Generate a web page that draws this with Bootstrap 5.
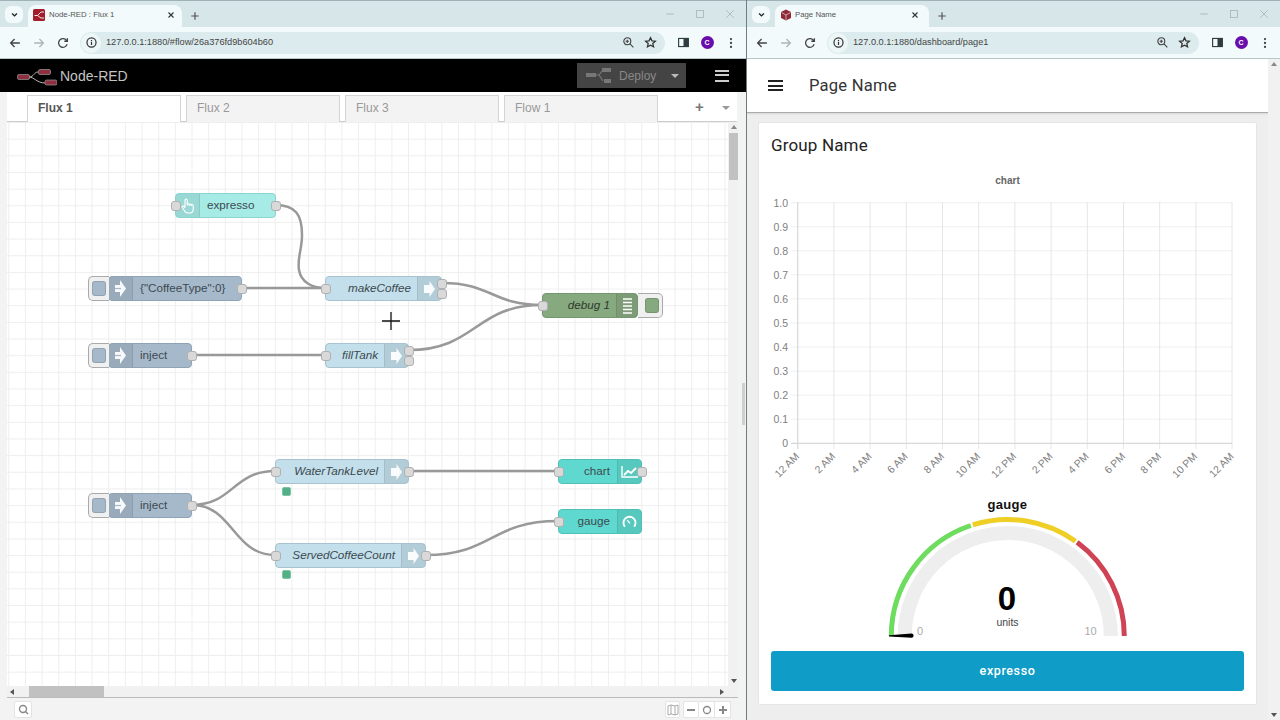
<!doctype html>
<html lang="en">
<head>
<meta charset="utf-8">
<title>Node-RED and Dashboard</title>
<link href="https://cdn.jsdelivr.net/npm/bootstrap@5.3.0/dist/css/bootstrap.min.css" rel="stylesheet">
<style>
html,body{height:720px;overflow:hidden;margin:0;background:#fff;font-family:"Liberation Sans",Arial,sans-serif}
.stage{width:1280px;height:720px}
.win{height:720px;min-width:0}
.win-l{width:747px;flex:0 0 747px;border-right:1px solid #6f7f81}
.win-r{width:533px;flex:0 0 533px}
.strip{height:27px;flex:0 0 27px;background:#d7e6e8;border-top:1px solid #9fb3b6;padding-left:5px}
.chev{width:18px;height:17px;background:#f3fafb;border-radius:6px;margin-bottom:4px}
.ctab{width:154px;height:22px;margin-left:5px;background:#f3fafb;border-radius:8px 8px 0 0;font-size:7.8px;color:#555;padding:0 6px 2px 5px}
.ctab-t{margin-left:4px;white-space:nowrap}
.win-r .ctab{padding-right:9px}
.win-r .ctab-t{margin-left:3px}
.plus-b{width:26px;margin-left:0;margin-bottom:5px}
.ctrls{margin-left:auto;margin-right:1px;margin-bottom:4px}
.ctrl{width:30px;height:18px}
.tools{height:32px;flex:0 0 32px;background:#f3fafb;border-bottom:1px solid #b8c8ca;padding:0 3px}
.tb{width:24px;height:24px;flex:0 0 24px}
.omni{height:22px;background:#dcebed;border-radius:11px;margin:0 6px 0 5px;padding:0 4px 0 1px;font-size:9.2px;color:#444;min-width:0}
.omni-i{width:20px;height:20px;background:#eef7f8;border-radius:50%;flex:0 0 20px}
.omni-u{margin-left:5px;white-space:nowrap}
.omni-b{width:22px;height:20px}
.avatar{width:13px;height:13px;border-radius:50%;background:#6a0dad;color:#fff;font-size:7px;line-height:13px;text-align:center;font-weight:700}
.nr-head{height:33px;flex:0 0 33px;background:#000;padding:0 17px 0 17px;flex-wrap:nowrap}
.nr-logo{margin-top:2px}
.nr-name{color:#c4c4c4;font-size:14px;margin-left:3px;margin-top:2px}
.nr-deploy{width:109px;height:25px;background:#444;color:#888;font-size:12px;border:0;border-radius:0;padding:0 8px 0 9px;margin-left:auto;margin-right:29px}
.nr-deploy:hover{background:#444;color:#888}
.nr-caret{width:0;height:0;border-left:4px solid transparent;border-right:4px solid transparent;border-top:4px solid #bbb;margin-left:auto;margin-right:-1px}
.nr-burger{width:14px;height:12px;border-top:2.5px solid #ccc;border-bottom:2.5px solid #ccc;position:relative}
.nr-burger::after{content:"";display:block;height:2.5px;background:#ccc;margin-top:2.25px}
.nr-tabs{height:30px;flex:0 0 30px;background:#fff;margin-left:7px;border-bottom:1px solid #ccc;padding:3px 0 0 20px;margin-right:1px;position:relative;flex-wrap:nowrap}
.nr-tab{width:154px;height:27px;margin:0 5px 0 0;border:1px solid #d4d4d4;border-bottom:0;background:#f3f3f3;color:#999;font-size:12px;padding:3px 0 0 10px}
.nr-tab.on{background:#fff;color:#555;font-weight:700;height:27px;position:relative;z-index:1;padding-left:10px}
.nr-tabs .ms-auto{height:23px;margin-right:7px}
.nr-plus{color:#777;font-size:15px;font-weight:700;line-height:1;width:16px;margin-right:11px}
.nr-tcaret{width:0;height:0;border-left:4px solid transparent;border-right:4px solid transparent;border-top:4px solid #999;margin-top:3px}
.work{flex:1 1 auto;min-height:0;background:#f3f3f3}
.canv-row{height:564px;flex:0 0 564px}
.canv{width:721px;height:564px;flex:0 0 721px;position:relative;overflow:hidden;background-color:#fff;
 background-image:linear-gradient(#eee 1px,transparent 1px),linear-gradient(90deg,#eee 1px,transparent 1px);background-size:16.67px 16.67px;background-position:1.3px 0}
.wires{position:absolute;left:0;top:0}
.vbar{width:10px;flex:0 0 10px;background:#f1f1f1;position:relative}
.vthumb{position:absolute;left:1px;right:0;top:11px;height:47px;background:#c1c1c1}
.sarr{position:absolute;width:0;height:0}
.sarr-u{top:3px;left:3px;border-left:3px solid transparent;border-right:3px solid transparent;border-bottom:4px solid #888}
.sarr-d{bottom:3px;left:3px;border-left:3px solid transparent;border-right:3px solid transparent;border-top:4px solid #555}
.hbar{height:11px;flex:0 0 11px;background:#f1f1f1;position:relative;border-bottom:1px solid #bbb;box-sizing:content-box;margin-left:7px}
.hthumb{position:absolute;left:22px;top:0;width:75px;height:11px;background:#c1c1c1}
.sarr-l{left:3px;top:3px;border-top:3px solid transparent;border-bottom:3px solid transparent;border-right:4px solid #555}
.sarr-r{right:14px;top:3px;border-top:3px solid transparent;border-bottom:3px solid transparent;border-left:4px solid #555}
.nr-foot{height:23px;padding:3px 7px 0 14px}
.nr-fb{height:17px;background:#fff;border:1px solid #e4e4e4;border-radius:2px;width:18px}
.nr-fb2{width:16px}
.nr-fb-map{width:15px;margin-right:3px}
.nr-fb3{width:16px;border-left:0;border-radius:0}
.nr-sep{width:8px;flex:0 0 8px;background:#f3f3f3;position:relative}
.nr-handle{position:absolute;left:4px;top:291px;width:3px;height:42px;background:#cfcfcf}
.nnode{position:absolute;height:25px;border:1px solid #9cb0b8;border-radius:4px;display:flex;align-items:center;font-size:11.7px;color:#3c4a50;white-space:nowrap;padding-bottom:1px}
.nlab{margin-left:auto;margin-right:30px}
.nlab-l{margin-left:31px}
.nico{position:absolute;top:0;bottom:0;width:24px;background:rgba(0,0,0,.08);display:flex;align-items:center;justify-content:center}
.nico-l{left:0;border-right:1px solid rgba(0,0,0,.08);border-radius:3px 0 0 3px}
.nico-r{right:0;border-left:1px solid rgba(0,0,0,.08);border-radius:0 3px 3px 0}
.nport{position:absolute;width:10px;height:10px;background:#d9d9d9;border:1px solid #b0b0b0;border-radius:3px;top:6.5px;z-index:2}
.nport-i{left:-5.5px}
.nport-o{right:-5.5px}
.nport-a{top:1.5px}
.nport-b{top:11.5px}
.nk-inj{background:#a6b9cb;border-color:#8ea3b6}
.nk-fn{background:#c3dfeb;font-style:italic;border-color:#a8c3cf}
.nk-dbg{background:#87a980;font-style:italic;border-color:#75956f;color:#2e3a2b}
.nk-dbg .nlab{margin-right:27px}
.nk-dbg .nico{width:21px}
.nk-ui{background:#5fd9cf;border-color:#4fc0b7}
.nk-ui .nlab{margin-right:31px}
.nk-btn{background:#a6ebe6;border-color:#8bd3ce}
.nbtn{position:absolute;top:-1px;height:25px;background:#f0f0f0;border:1px solid #aaa}
.nbtn-l{left:-21px;width:21px;border-radius:5px 0 0 5px;border-right:0}
.nbtn-r{right:-26px;width:25px;border-radius:0 5px 5px 0;border-left:0;}
.nbtn i{position:absolute;display:block;width:14px;height:15px;top:4px;border-radius:3px;border:1px solid rgba(0,0,0,.12)}
.nbtn-l i{left:3px}
.nbtn-r i{left:7px}
.nstat{position:absolute;width:9px;height:9px;border-radius:2px;background:#53b086;border:1px solid #7cc4a4;left:275px}
#n1{left:168px;top:71px;width:101px}
#n2{left:101px;top:154px;width:134px}
#n3{left:318px;top:154px;width:117px}
#n4{left:535px;top:171px;width:96px}
#n5{left:101px;top:221px;width:84px}
#n6{left:318px;top:221px;width:84px}
#n7{left:101px;top:371px;width:84px}
#n8{left:268px;top:337px;width:134px}
#n9{left:268px;top:421px;width:151px}
#n10{left:551px;top:337px;width:84px}
#n11{left:551px;top:387px;width:84px}
#st1{top:365px}
#st2{top:448px}
.cross{position:absolute;left:373px;top:188px}
.dash-head{height:54px;flex:0 0 54px;background:#fff;border-bottom:1px solid #aaa;padding:0 0 0 21px;flex-wrap:nowrap;justify-content:flex-start;box-shadow:0 1px 2px rgba(0,0,0,.1)}
.dash-burger{width:15px;height:11px;border-top:2px solid #222;border-bottom:2px solid #222}
.dash-burger::after{content:"";display:block;height:2px;background:#222;margin-top:2.5px}
.dash-title{font-family:Roboto,"Liberation Sans",sans-serif;font-size:16.6px;color:#333;margin-left:26px;margin-top:2px;letter-spacing:.2px}
.dash-body{flex:1 1 auto;min-height:0}
.dash-main{flex:1 1 auto;background:#eee;padding:9px 11px 0 11px;min-width:0}
.dash-sb{width:12px;flex:0 0 12px;background:#f1f1f1;position:relative}
.dash-card{height:583px;border:1px solid #e6e6e6;border-radius:2px;padding:0}
.dash-gt{font-family:Roboto,"Liberation Sans",sans-serif;font-size:17px;color:#222;line-height:20px;margin:12px 0 15px 12px;letter-spacing:.15px}
.dash-svg{display:block}
.dash-btn{display:block;width:473px;height:40px;margin:6px 0 0 12px;background:#0f9dc7;border:0;border-radius:3px;color:#fff;font-family:Roboto,"Liberation Sans",sans-serif;font-size:12.5px;font-weight:500;letter-spacing:.6px;padding:0}
.dash-btn:hover{background:#0f9dc7;color:#fff}
.ct{font-family:"Liberation Sans",sans-serif;font-size:10.5px;fill:#808080}
</style>
</head>
<body>
<svg class="d-none">
<symbol id="i-chev" viewBox="0 0 16 16"><path d="M4.5 6.5 8 10l3.5-3.5" fill="none" stroke="#222" stroke-width="2"/></symbol>
<symbol id="i-x" viewBox="0 0 16 16"><path d="M4 4l8 8M12 4l-8 8" fill="none" stroke="#333" stroke-width="1.8"/></symbol>
<symbol id="i-plus" viewBox="0 0 16 16"><path d="M8 3v10M3 8h10" fill="none" stroke="#555" stroke-width="1.6"/></symbol>
<symbol id="i-min" viewBox="0 0 16 16"><path d="M2 8h12" stroke="#9fb2b4" stroke-width="1.2"/></symbol>
<symbol id="i-max" viewBox="0 0 16 16"><rect x="2.5" y="2.5" width="11" height="11" fill="none" stroke="#9fb2b4" stroke-width="1.2"/></symbol>
<symbol id="i-close" viewBox="0 0 16 16"><path d="M2 2l12 12M14 2 2 14" fill="none" stroke="#9fb2b4" stroke-width="1.2"/></symbol>
<symbol id="i-back" viewBox="0 0 16 16"><path d="M13.5 8H3M7.5 3.5 3 8l4.5 4.5" fill="none" stroke="#444" stroke-width="1.5"/></symbol>
<symbol id="i-fwd" viewBox="0 0 16 16"><path d="M2.5 8H13M8.5 3.5 13 8l-4.5 4.5" fill="none" stroke="#a9b6b8" stroke-width="1.5"/></symbol>
<symbol id="i-rel" viewBox="0 0 16 16"><path d="M12.7 9.5A5 5 0 1 1 11.5 4.4L13 6M13 2.5V6H9.5" fill="none" stroke="#444" stroke-width="1.5"/></symbol>
<symbol id="i-info" viewBox="0 0 16 16"><circle cx="8" cy="8" r="5.6" fill="none" stroke="#333" stroke-width="1.5"/><path d="M8 7v4M8 5v1.2" stroke="#333" stroke-width="1.5"/></symbol>
<symbol id="i-zoom" viewBox="0 0 16 16"><circle cx="6.5" cy="6.5" r="4.3" fill="none" stroke="#444" stroke-width="1.4"/><path d="M9.8 9.8 14 14M4.5 6.5h4M6.5 4.5v4" fill="none" stroke="#444" stroke-width="1.4"/></symbol>
<symbol id="i-star" viewBox="0 0 16 16"><path d="M8 2l1.8 4 4.2.4-3.2 2.8 1 4.2L8 11.2l-3.8 2.2 1-4.2L2 6.4 6.200 6z" fill="none" stroke="#333" stroke-width="1.5"/></symbol>
<symbol id="i-side" viewBox="0 0 16 16"><rect x="2" y="3" width="12" height="10" fill="none" stroke="#2f3d40" stroke-width="1.4"/><rect x="8" y="3" width="6" height="10" fill="#2f3d40"/></symbol>
<symbol id="i-keb" viewBox="0 0 16 16"><circle cx="8" cy="3.500" r="1.300" fill="#444"/><circle cx="8" cy="8" r="1.300" fill="#444"/><circle cx="8" cy="12.500" r="1.300" fill="#444"/></symbol>
<symbol id="i-inj" viewBox="0 0 11 17"><path d="M0 5h5V0l6 8.500-6 8.500v-5H0z" fill="#fff" opacity=".92"/><path d="M0 8.500h6" stroke="#a6b9cb" stroke-width="1.200"/></symbol>
<symbol id="i-fn" viewBox="0 0 11 16"><path d="M0 4h5.500V0L11 8l-5.500 8v-4H0z" fill="#fff" opacity=".92"/></symbol>
</svg>

<div class="stage d-flex">
<section class="win win-l d-flex flex-column">
  <div class="strip d-flex align-items-end">
    <div class="chev d-flex align-items-center justify-content-center"><svg width="11" height="11"><use href="#i-chev"/></svg></div>
    <div class="ctab d-flex align-items-center">
      <svg width="12" height="12" viewBox="0 0 12 12"><rect width="12" height="12" rx="1.500" fill="#a31d2b"/><path d="M1.500 6.500h3L8 3h3M4.500 6.500 8 9h3" fill="none" stroke="#fff" stroke-width=".9"/></svg>
      <span class="ctab-t">Node-RED : Flux 1</span>
      <svg class="ms-auto" width="10" height="10"><use href="#i-x"/></svg>
    </div>
    <div class="plus-b d-flex justify-content-center"><svg width="12" height="12"><use href="#i-plus"/></svg></div>
    <div class="ctrls d-flex">
      <div class="ctrl d-flex align-items-center justify-content-center"><svg width="10" height="10"><use href="#i-min"/></svg></div>
      <div class="ctrl d-flex align-items-center justify-content-center"><svg width="10" height="10"><use href="#i-max"/></svg></div>
      <div class="ctrl d-flex align-items-center justify-content-center"><svg width="10" height="10"><use href="#i-close"/></svg></div>
    </div>
  </div>
  <div class="tools d-flex align-items-center">
    <div class="tb d-flex align-items-center justify-content-center"><svg width="14" height="14"><use href="#i-back"/></svg></div>
    <div class="tb d-flex align-items-center justify-content-center"><svg width="14" height="14"><use href="#i-fwd"/></svg></div>
    <div class="tb d-flex align-items-center justify-content-center"><svg width="14" height="14"><use href="#i-rel"/></svg></div>
    <div class="omni flex-grow-1 d-flex align-items-center">
      <div class="omni-i d-flex align-items-center justify-content-center"><svg width="13" height="13"><use href="#i-info"/></svg></div>
      <span class="omni-u">127.0.0.1:1880/#flow/26a376fd9b604b60</span>
      <div class="omni-b ms-auto d-flex align-items-center justify-content-center"><svg width="13" height="13"><use href="#i-zoom"/></svg></div>
      <div class="omni-b d-flex align-items-center justify-content-center"><svg width="13" height="13"><use href="#i-star"/></svg></div>
    </div>
    <div class="tb d-flex align-items-center justify-content-center"><svg width="13" height="13"><use href="#i-side"/></svg></div>
    <div class="tb d-flex align-items-center justify-content-center"><div class="avatar">C</div></div>
    <div class="tb d-flex align-items-center justify-content-center"><svg width="14" height="14"><use href="#i-keb"/></svg></div>
  </div>

  <nav class="navbar nr-head">
    <svg class="nr-logo" width="40" height="18" viewBox="0 0 40 18"><path d="M12 9C17 9 17 4 21 4M12 9C17 9 20 15 28 15" fill="none" stroke="#bbb" stroke-width="1"/><rect x=".5" y="6.500" width="12" height="5" rx="1.500" fill="#8f3040" stroke="#999" stroke-width=".7"/><rect x="21.500" y="1.500" width="12" height="5" rx="1.500" fill="#8f3040" stroke="#999" stroke-width=".7"/><rect x="28" y="12" width="12" height="5" rx="1.500" fill="#8f3040" stroke="#999" stroke-width=".7"/></svg>
    <span class="nr-name">Node-RED</span>
    <button class="btn nr-deploy d-flex align-items-center" type="button">
      <svg width="25" height="17" viewBox="0 0 25 17"><path d="M10 8h3l4-5M13 8l4 6" fill="none" stroke="#777" stroke-width="1.200"/><rect y="6" width="10" height="4" fill="#777"/><rect x="16" y="1" width="9" height="4" fill="#777"/><rect x="18" y="12" width="7" height="4" fill="#777"/></svg>
      <span class="ms-2">Deploy</span><span class="nr-caret"></span>
    </button>
    <div class="nr-burger"></div>
  </nav>

  <div class="work d-flex">
    <div class="flex-grow-1 d-flex flex-column">
      <ul class="nav nr-tabs">
        <li class="nr-tab on">Flux 1</li>
        <li class="nr-tab">Flux 2</li>
        <li class="nr-tab">Flux 3</li>
        <li class="nr-tab">Flow 1</li>
        <li class="ms-auto d-flex align-items-center"><span class="nr-plus">+</span><span class="nr-tcaret"></span></li>
      </ul>
      <div class="canv-row d-flex">
        <div class="canv ms-auto">
          <svg class="wires" width="721" height="564" viewBox="7 122 721 564" fill="none" stroke="#999" stroke-width="2.500">
            <path d="M275 205C296 205 302 215 302 235C302 250 297 258 299 270C301 282 312 288 325 288"/>
            <path d="M242 288H325"/>
            <path d="M442 283C492 283 492 305 542 305"/>
            <path d="M409 350C476 350 475 305 542 305"/>
            <path d="M192 355H325"/>
            <path d="M192 505C233 505 233 471 275 471"/>
            <path d="M192 505C233 505 233 555 275 555"/>
            <path d="M409 471H558"/>
            <path d="M426 555C492 555 491 521 558 521"/>
          </svg>

          <div class="nnode nk-btn" id="n1"><div class="nico nico-l"><svg width="14" height="16" viewBox="0 0 14 16" fill="none" stroke="#fff" stroke-width="1.100"><path d="M4 9V2.200a1.100 1.100 0 0 1 2.200 0V7.500M6.200 6.500a1 1 0 0 1 2 0V8M8.200 7a1 1 0 0 1 2 0v1M10.200 7.500a1 1 0 0 1 2 0v3.500c0 2.500-1.500 4-3.500 4H7C5 15 4 14 3 12L1.300 9.500c-.8-1.200.8-2.200 1.600-1.100L4 10"/></svg></div><span class="nlab-l">expresso</span><span class="nport nport-i"></span><span class="nport nport-o"></span></div>

          <div class="nnode nk-inj" id="n2"><div class="nbtn nbtn-l"><i class="nk-inj"></i></div><div class="nico nico-l"><svg width="11" height="17"><use href="#i-inj"/></svg></div><span class="nlab-l">{"CoffeeType":0}</span><span class="nport nport-o"></span></div>

          <div class="nnode nk-fn" id="n3"><span class="nlab">makeCoffee</span><div class="nico nico-r"><svg width="11" height="16"><use href="#i-fn"/></svg></div><span class="nport nport-i"></span><span class="nport nport-o nport-a"></span><span class="nport nport-o nport-b"></span></div>

          <div class="nnode nk-dbg" id="n4"><span class="nlab">debug 1</span><div class="nico nico-r"><svg width="9" height="16" viewBox="0 0 9 16" stroke="#fff" stroke-width="1.500"><path d="M0 1h9M0 4.500h9M0 8h9M0 11.500h9M0 15h9"/></svg></div><div class="nbtn nbtn-r"><i class="nk-dbg"></i></div><span class="nport nport-i"></span></div>

          <div class="nnode nk-inj" id="n5"><div class="nbtn nbtn-l"><i class="nk-inj"></i></div><div class="nico nico-l"><svg width="11" height="17"><use href="#i-inj"/></svg></div><span class="nlab-l">inject</span><span class="nport nport-o"></span></div>

          <div class="nnode nk-fn" id="n6"><span class="nlab">fillTank</span><div class="nico nico-r"><svg width="11" height="16"><use href="#i-fn"/></svg></div><span class="nport nport-i"></span><span class="nport nport-o nport-a"></span><span class="nport nport-o nport-b"></span></div>

          <div class="nnode nk-inj" id="n7"><div class="nbtn nbtn-l"><i class="nk-inj"></i></div><div class="nico nico-l"><svg width="11" height="17"><use href="#i-inj"/></svg></div><span class="nlab-l">inject</span><span class="nport nport-o"></span></div>

          <div class="nnode nk-fn" id="n8"><span class="nlab">WaterTankLevel</span><div class="nico nico-r"><svg width="11" height="16"><use href="#i-fn"/></svg></div><span class="nport nport-i"></span><span class="nport nport-o"></span></div>
          <div class="nstat" id="st1"></div>

          <div class="nnode nk-fn" id="n9"><span class="nlab">ServedCoffeeCount</span><div class="nico nico-r"><svg width="11" height="16"><use href="#i-fn"/></svg></div><span class="nport nport-i"></span><span class="nport nport-o"></span></div>
          <div class="nstat" id="st2"></div>

          <div class="nnode nk-ui" id="n10"><span class="nlab">chart</span><div class="nico nico-r"><svg width="17" height="12" viewBox="0 0 17 12" fill="none" stroke="#fff" stroke-width="1.400"><path d="M1 0v11h16"/><path d="M3 9l4-4 3 2 5-5" stroke-width="1.800"/></svg></div><span class="nport nport-i"></span><span class="nport nport-o"></span></div>

          <div class="nnode nk-ui" id="n11"><span class="nlab">gauge</span><div class="nico nico-r"><svg width="15" height="13" viewBox="0 0 16 14" fill="none" stroke="#fff" stroke-width="2"><path d="M3 12.500A6.500 6.500 0 1 1 13 12.500"/><path d="M5.500 5.500l3 3.500" stroke-width="1.500"/></svg></div><span class="nport nport-i"></span></div>

          <svg class="cross" width="22" height="22" viewBox="0 0 22 22"><path d="M11 2v18M2 11h18" stroke="#111" stroke-width="1.300"/></svg>
        </div>
        <div class="vbar"><div class="sarr sarr-u"></div><div class="vthumb"></div><div class="sarr sarr-d"></div></div>
      </div>
      <div class="hbar"><div class="hthumb"></div><div class="sarr sarr-l"></div><div class="sarr sarr-r"></div></div>
      <div class="nr-foot d-flex align-items-start">
        <div class="nr-fb d-flex align-items-center justify-content-center"><svg width="11" height="11" viewBox="0 0 11 11" fill="none" stroke="#888" stroke-width="1.400"><circle cx="5" cy="5" r="3.500"/><path d="M7.500 7.500 10 10"/></svg></div>
        <div class="nr-fb nr-fb-map ms-auto d-flex align-items-center justify-content-center"><svg width="12" height="12" viewBox="0 0 12 12" fill="none" stroke="#aaa" stroke-width="1"><path d="M1 2l3-1 4 1 3-1v9l-3 1-4-1-3 1zM4 1v9M8 2v9"/></svg></div>
        <div class="nr-fb nr-fb2 d-flex align-items-center justify-content-center"><svg width="10" height="10" viewBox="0 0 10 10"><path d="M1 5h8" stroke="#888" stroke-width="2"/></svg></div>
        <div class="nr-fb nr-fb3 d-flex align-items-center justify-content-center"><svg width="10" height="10" viewBox="0 0 10 10"><circle cx="5" cy="5" r="3.500" fill="none" stroke="#888" stroke-width="1.300"/></svg></div>
        <div class="nr-fb nr-fb3 d-flex align-items-center justify-content-center"><svg width="10" height="10" viewBox="0 0 10 10"><path d="M1 5h8M5 1v8" stroke="#888" stroke-width="2"/></svg></div>
      </div>
    </div>
    <div class="nr-sep"><div class="nr-handle"></div></div>
  </div>
</section>

<section class="win win-r d-flex flex-column">
  <div class="strip d-flex align-items-end">
    <div class="chev d-flex align-items-center justify-content-center"><svg width="11" height="11"><use href="#i-chev"/></svg></div>
    <div class="ctab d-flex align-items-center">
      <svg width="12" height="12" viewBox="0 0 12 12"><path d="M6 .5 11 3v6l-5 2.500L1 9V3z" fill="#8d2a36"/><path d="M1.500 3.500 6 6l4.500-2.500M6 6v5" fill="none" stroke="#e3c3c6" stroke-width=".8"/></svg>
      <span class="ctab-t">Page Name</span>
      <svg class="ms-auto" width="10" height="10"><use href="#i-x"/></svg>
    </div>
    <div class="plus-b d-flex justify-content-center"><svg width="12" height="12"><use href="#i-plus"/></svg></div>
    <div class="ctrls d-flex">
      <div class="ctrl d-flex align-items-center justify-content-center"><svg width="10" height="10"><use href="#i-min"/></svg></div>
      <div class="ctrl d-flex align-items-center justify-content-center"><svg width="10" height="10"><use href="#i-max"/></svg></div>
      <div class="ctrl d-flex align-items-center justify-content-center"><svg width="10" height="10"><use href="#i-close"/></svg></div>
    </div>
  </div>
  <div class="tools d-flex align-items-center">
    <div class="tb d-flex align-items-center justify-content-center"><svg width="14" height="14"><use href="#i-back"/></svg></div>
    <div class="tb d-flex align-items-center justify-content-center"><svg width="14" height="14"><use href="#i-fwd"/></svg></div>
    <div class="tb d-flex align-items-center justify-content-center"><svg width="14" height="14"><use href="#i-rel"/></svg></div>
    <div class="omni flex-grow-1 d-flex align-items-center">
      <div class="omni-i d-flex align-items-center justify-content-center"><svg width="13" height="13"><use href="#i-info"/></svg></div>
      <span class="omni-u">127.0.0.1:1880/dashboard/page1</span>
      <div class="omni-b ms-auto d-flex align-items-center justify-content-center"><svg width="13" height="13"><use href="#i-zoom"/></svg></div>
      <div class="omni-b d-flex align-items-center justify-content-center"><svg width="13" height="13"><use href="#i-star"/></svg></div>
    </div>
    <div class="tb d-flex align-items-center justify-content-center"><svg width="13" height="13"><use href="#i-side"/></svg></div>
    <div class="tb d-flex align-items-center justify-content-center"><div class="avatar">C</div></div>
    <div class="tb d-flex align-items-center justify-content-center"><svg width="14" height="14"><use href="#i-keb"/></svg></div>
  </div>

  <div class="dash-body d-flex">
    <div class="flex-grow-1 d-flex flex-column">
      <nav class="navbar dash-head">
        <div class="dash-burger"></div>
        <span class="dash-title">Page Name</span>
      </nav>
      <main class="dash-main">
        <div class="card dash-card">
          <h2 class="dash-gt fw-normal">Group Name</h2>
          <svg class="dash-svg" width="497" height="320" viewBox="759 170 497 320">
            <g stroke="#efefef" stroke-width="1">
              <path d="M791 202.700H1232M791 226.700H1232M791 250.800H1232M791 274.800H1232M791 298.900H1232M791 323H1232M791 347H1232M791 371.100H1232M791 395.200H1232M791 419.200H1232"/>
            </g>
            <g stroke="#e6e6e6" stroke-width="1">
              <path d="M833.900 202V449M870.100 202V449M906.300 202V449M942.500 202V449M978.700 202V449M1014.900 202V449M1051.100 202V449M1087.300 202V449M1123.500 202V449M1159.700 202V449M1195.900 202V449M1232 202V449"/>
            </g>
            <path d="M797.700 202V449M791 443.300H1232" stroke="#d8d8d8" stroke-width="1.200"/>
            <text x="1007.500" y="183.500" text-anchor="middle" font-family="Liberation Sans" font-size="10" font-weight="700" fill="#666">chart</text>
            <g class="ct" text-anchor="end">
              <text x="788" y="206.500">1.0</text><text x="788" y="230.500">0.9</text><text x="788" y="254.500">0.8</text><text x="788" y="278.500">0.7</text><text x="788" y="302.500">0.6</text><text x="788" y="326.500">0.5</text><text x="788" y="350.500">0.4</text><text x="788" y="374.500">0.3</text><text x="788" y="398.500">0.2</text><text x="788" y="422.500">0.1</text><text x="788" y="446.500">0</text>
              <text transform="translate(800 457) rotate(-45)">12 AM</text>
              <text transform="translate(836 457) rotate(-45)">2 AM</text>
              <text transform="translate(872.500 457) rotate(-45)">4 AM</text>
              <text transform="translate(908.500 457) rotate(-45)">6 AM</text>
              <text transform="translate(945 457) rotate(-45)">8 AM</text>
              <text transform="translate(981 457) rotate(-45)">10 AM</text>
              <text transform="translate(1017 457) rotate(-45)">12 PM</text>
              <text transform="translate(1053.500 457) rotate(-45)">2 PM</text>
              <text transform="translate(1089.500 457) rotate(-45)">4 PM</text>
              <text transform="translate(1126 457) rotate(-45)">6 PM</text>
              <text transform="translate(1162 457) rotate(-45)">8 PM</text>
              <text transform="translate(1198 457) rotate(-45)">10 PM</text>
              <text transform="translate(1234.500 457) rotate(-45)">12 AM</text>
            </g>
          </svg>
          <svg class="dash-svg" width="497" height="155" viewBox="759 490 497 155">
            <text x="1007.500" y="509" text-anchor="middle" font-family="Liberation Sans" font-size="13" font-weight="700" letter-spacing=".3" fill="#111">gauge</text>
            <path d="M904.800 636A103 103 0 0 1 1110.800 636" fill="none" stroke="#eee" stroke-width="14"/>
            <g fill="none" stroke-width="5">
              <path d="M891.300 636A116.500 116.500 0 0 1 970.800 525.500" stroke="#6ddc5f"/>
              <path d="M972.800 524.900A116.500 116.500 0 0 1 1075.500 541.200" stroke="#efcf26"/>
              <path d="M1077.100 542.300A116.500 116.500 0 0 1 1124.300 636" stroke="#cf4355"/>
            </g>
            <path d="M889 635.300 911.500 633.600a2.100 2.100 0 0 1 0 4.200L889 636.500z" fill="#000"/>
            <text x="920" y="635" text-anchor="middle" font-family="Liberation Sans" font-size="11" fill="#aaa">0</text>
            <text x="1090.500" y="635" text-anchor="middle" font-family="Liberation Sans" font-size="11" fill="#aaa">10</text>
            <text x="1007" y="610" text-anchor="middle" font-family="Liberation Sans" font-size="33" font-weight="700" fill="#000">0</text>
            <text x="1007.500" y="626" text-anchor="middle" font-family="Liberation Sans" font-size="10.500" fill="#444">units</text>
          </svg>
          <button class="btn dash-btn" type="button">expresso</button>
        </div>
      </main>
    </div>
    <div class="dash-sb"><div class="sarr sarr-u"></div><div class="sarr sarr-d"></div></div>
  </div>
</section>
</div>
</body>
</html>
